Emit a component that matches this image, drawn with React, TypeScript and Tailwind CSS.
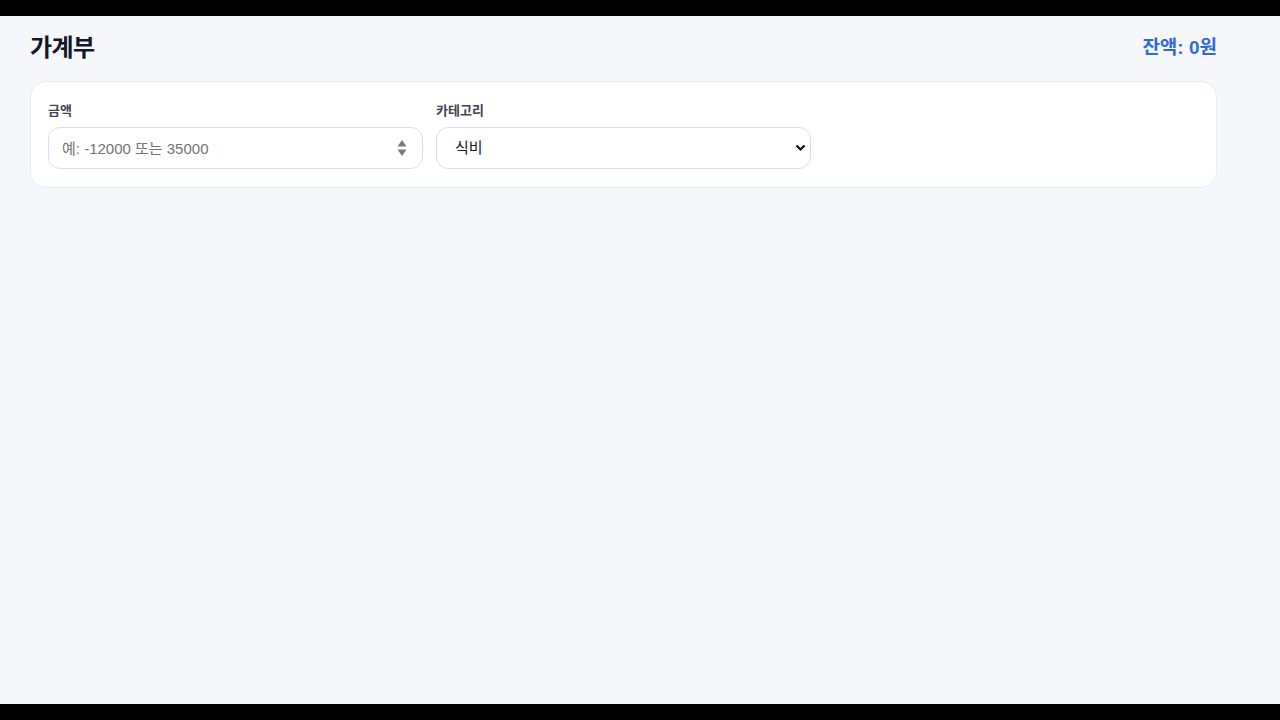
import { useState } from 'react';

const font = { fontFamily: '"Liberation Sans", "Noto Sans CJK KR", sans-serif' };

export default function App() {
  const [amount, setAmount] = useState('');
  const [category, setCategory] = useState('식비');

  return (
    <div className="h-[720px] flex flex-col bg-black" style={font}>
      <div className="h-[16px] shrink-0 bg-black" />
      <div className="flex-1 bg-[#f5f7fb]">
        <div className="w-[1187px] ml-[30px] pt-[16px]">
          <header className="flex items-center justify-between h-[32px]">
            <h1 className="text-[24px] font-bold text-[#111827] tracking-tight">가계부</h1>
            <div className="text-[19px] font-bold text-[#2f6bd8]">잔액: 0원</div>
          </header>

          <div className="mt-[17px] bg-white rounded-2xl border border-[#e8ebf3] px-[17px] pt-[21px] pb-[18px]">
            <div className="grid grid-cols-3 gap-[13px]">
              <div>
                <label className="block text-[13px] font-bold text-[#3f4654] leading-4 mb-[8px]">금액</label>
                <div className="relative">
                  <input
                    type="text"
                    value={amount}
                    onChange={(e) => setAmount(e.target.value)}
                    placeholder="예: -12000 또는 35000"
                    className="w-full h-[42px] rounded-xl border border-[#d9ddf0] bg-white pl-[13px] pr-8 text-[15px] text-[#111827] placeholder:text-[#757575] outline-none"
                  />
                  <svg className="absolute right-[16px] top-[12px]" width="10" height="18" viewBox="0 0 10 18">
                    <path d="M5 1 L9.5 7.5 L0.5 7.5 Z" fill="#7a7a7a" />
                    <path d="M5 17 L9.5 10.5 L0.5 10.5 Z" fill="#7a7a7a" />
                  </svg>
                </div>
              </div>
              <div>
                <label className="block text-[13px] font-bold text-[#3f4654] leading-4 mb-[8px]">카테고리</label>
                <div className="relative">
                  <select
                    value={category}
                    onChange={(e) => setCategory(e.target.value)}
                    className="w-full h-[42px] appearance-none rounded-xl border border-[#d9ddf0] bg-white pl-[18px] pr-8 text-[15px] text-[#111827] outline-none"
                  >
                    <option>식비</option>
                    <option>교통</option>
                    <option>쇼핑</option>
                    <option>급여</option>
                    <option>기타</option>
                  </select>
                  <svg className="absolute right-[5px] top-[17px] pointer-events-none" width="11" height="8" viewBox="0 0 11 8">
                    <path d="M1.5 1.5 L5.5 5.5 L9.5 1.5" fill="none" stroke="#111" strokeWidth="2.2" />
                  </svg>
                </div>
              </div>
              <div />
            </div>
          </div>
        </div>
      </div>
      <div className="h-[16px] shrink-0 bg-black" />
    </div>
  );
}
